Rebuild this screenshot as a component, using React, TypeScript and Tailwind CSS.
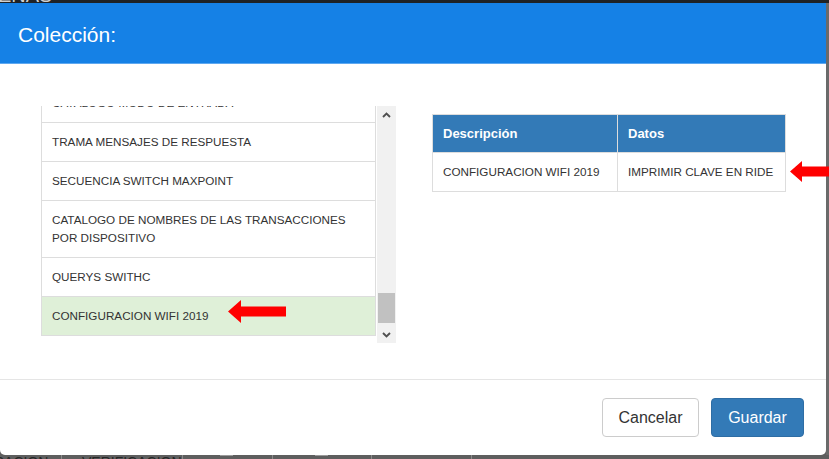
export default function App() {
  const items = [
    "CATALOGO MODO DE ENTRADA",
    "TRAMA MENSAJES DE RESPUESTA",
    "SECUENCIA SWITCH MAXPOINT",
    "CATALOGO DE NOMBRES DE LAS TRANSACCIONES POR DISPOSITIVO",
    "QUERYS SWITHC",
  ];
  return (
    <div className="relative w-[829px] h-[459px] overflow-hidden bg-[#5e5e5e] font-['Liberation_Sans',Arial,sans-serif]">
      {/* backdrop top strip */}
      <div className="h-[3px] bg-[#1e2226] overflow-hidden flex items-end">
        <span className="shrink-0 text-[20px] leading-[20px] text-[#cfcfcf] mb-[-2px] ml-[-2px]">ENAS</span>
      </div>

      {/* modal */}
      <div className="flex">
        <div className="w-[826px] h-[452px] bg-white rounded-b-[5px] flex flex-col overflow-hidden">
          {/* header */}
          <div className="h-[61px] shrink-0 bg-[#1581e6] border-b border-[#5ea8f0] pl-[18px] pt-[20px]">
            <div className="text-[21px] leading-[23px] text-white">Colección:</div>
          </div>

          {/* body */}
          <div className="h-[315px] shrink-0 flex pl-[41px]">
            <div className="pt-[42px] flex">
              <div className="relative h-[237px] w-[335px] overflow-hidden flex flex-col justify-end pb-[7px]">
                {items.map((t) => (
                  <div
                    key={t}
                    className="shrink-0 border-x border-t border-[#dddddd] px-[10px] py-[10px] text-[11.7px] leading-[18px] text-[#333333]"
                  >
                    {t}
                  </div>
                ))}
                <div className="relative shrink-0 border border-[#dddddd] bg-[#dff0d8] px-[10px] py-[10px] text-[11.7px] leading-[18px] text-[#333333]">
                  CONFIGURACION WIFI 2019
                  <svg
                    className="absolute left-[186px] top-[3px]"
                    width="58"
                    height="23"
                    viewBox="0 0 58 23"
                  >
                    <polygon points="0,11.5 13,0 13,6.5 58,6.5 58,16.5 13,16.5 13,23" fill="#ff0000" />
                  </svg>
                </div>
              </div>
              {/* scrollbar */}
              <div className="ml-[1px] w-[19px] h-[237px] bg-[#f1f1f1] flex flex-col">
                <div className="h-[17px] flex items-center justify-center">
                  <svg width="9" height="6" viewBox="0 0 9 6">
                    <path d="M1 5 L4.5 1.5 L8 5" stroke="#505050" strokeWidth="1.9" fill="none" />
                  </svg>
                </div>
                <div className="flex-1 flex flex-col justify-end pb-[3px] px-[1px]">
                  <div className="h-[30px] bg-[#c1c1c1]" />
                </div>
                <div className="h-[17px] flex items-center justify-center">
                  <svg width="9" height="6" viewBox="0 0 9 6">
                    <path d="M1 1 L4.5 4.5 L8 1" stroke="#505050" strokeWidth="1.9" fill="none" />
                  </svg>
                </div>
              </div>
            </div>

            {/* table */}
            <div className="ml-[36px] pt-[50px]">
              <div className="w-[354px] border border-[#dddddd]">
                <div className="flex h-[37px] bg-[#337ab7] text-white font-bold text-[13px]">
                  <div className="w-[185px] border-r border-[#dddddd] px-[10px] flex items-center">Descripción</div>
                  <div className="flex-1 px-[10px] flex items-center">Datos</div>
                </div>
                <div className="flex h-[39px] border-t border-[#dddddd] text-[11.7px] text-[#333333] whitespace-nowrap">
                  <div className="w-[185px] border-r border-[#dddddd] px-[10px] flex items-center">CONFIGURACION WIFI 2019</div>
                  <div className="flex-1 px-[10px] flex items-center">IMPRIMIR CLAVE EN RIDE</div>
                </div>
              </div>
            </div>
          </div>

          {/* footer */}
          <div className="h-[76px] shrink-0 border-t border-[#e5e5e5] flex justify-end items-start pt-[18px] pr-[22px] gap-[12px]">
            <button className="w-[97px] h-[39px] rounded-[4px] border border-[#cccccc] bg-white text-[16px] text-[#333333] flex items-center justify-center">
              Cancelar
            </button>
            <button className="w-[93px] h-[39px] rounded-[4px] border border-[#2e6da4] bg-[#337ab7] text-[16px] text-white flex items-center justify-center">
              Guardar
            </button>
          </div>
        </div>
        <div className="w-[3px] h-[452px] bg-[#6a6a6a]" />
      </div>

      {/* backdrop bottom strip */}
      <div className="h-[4px] overflow-hidden flex items-start text-[14px] leading-[14px] text-[#262626]">
        <div className="w-[62px] shrink-0 border-r border-[#8a8a8a] h-[14px] overflow-hidden">
          <span className="ml-[-6px]">RACION</span>
        </div>
        <div className="w-[121px] shrink-0 border-r border-[#8a8a8a] h-[14px] pl-[20px]">VERIFICACION</div>
        <div className="w-[90px] shrink-0 border-r border-[#8a8a8a] h-[14px] pl-[37px]">
          <div className="w-[13px] h-[1px] bg-[#9a9a9a]" />
        </div>
        <div className="w-[99px] shrink-0 border-r border-[#8a8a8a] h-[14px] pl-[42px]">
          <div className="w-[13px] h-[1px] bg-[#9a9a9a]" />
        </div>
        <div className="w-[100px] shrink-0 border-r border-[#8a8a8a] h-[14px]" />
      </div>

      {/* annotation arrow beside table */}
      <svg className="absolute left-[790px] top-[161px]" width="40" height="21" viewBox="0 0 40 21">
        <polygon points="0,10.5 12,0 12,5.5 40,5.5 40,15.5 12,15.5 12,21" fill="#ff0000" />
      </svg>
    </div>
  );
}
